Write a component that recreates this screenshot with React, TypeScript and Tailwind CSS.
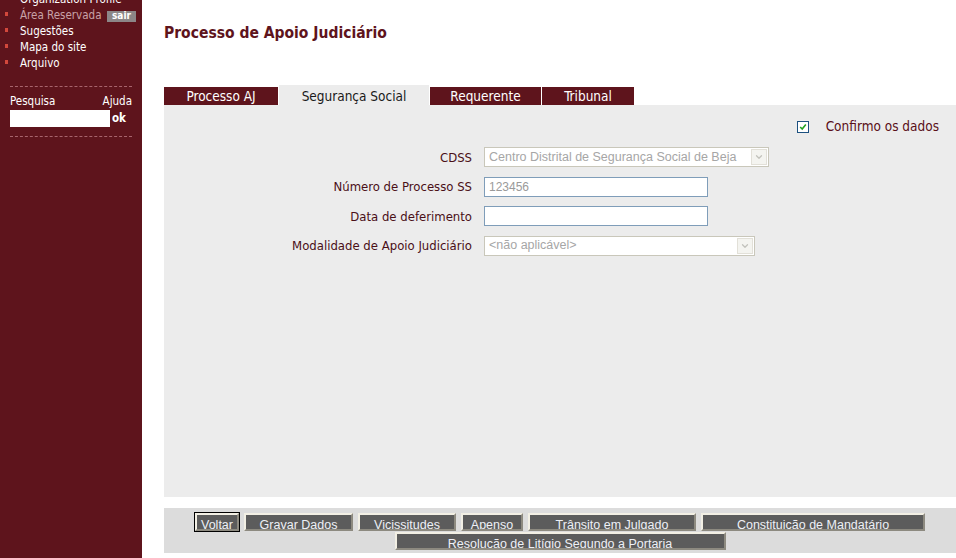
import { ChevronDown } from "lucide-react";

const menu = [
  { label: "Organization Profile", muted: false },
  { label: "Área Reservada", muted: true, badge: true },
  { label: "Sugestões", muted: false },
  { label: "Mapa do site", muted: false },
  { label: "Arquivo", muted: false },
];

const tabs = [
  { label: "Processo AJ", w: "w-[114px]" },
  { label: "Segurança Social", w: "w-[150px]", active: true },
  { label: "Requerente", w: "w-[111px]" },
  { label: "Tribunal", w: "w-[92px]" },
];

const buttons = [
  { label: "Voltar", w: "w-[44px]", focus: true },
  { label: "Gravar Dados", w: "w-[109px]" },
  { label: "Vicissitudes", w: "w-[98px]" },
  { label: "Apenso", w: "w-[62px]" },
  { label: "Trânsito em Julgado", w: "w-[168px]" },
  { label: "Constituição de Mandatário", w: "w-[224px]" },
  { label: "Resolução de Litígio Segundo a Portaria", w: "w-[331px]" },
];

function Sidebar() {
  return (
    <aside className="w-[142px] shrink-0 bg-[#5e141c] text-[11.5px] font-['DejaVu_Sans_Condensed',sans-serif]">
      <ul className="-mt-[8px]">
        {menu.map((item) => (
          <li key={item.label} className="relative flex h-[16px] items-center pl-[20px]">
            <span className="absolute left-[5px] top-[4px] h-[4px] w-[3px] bg-[#d2483c]" />
            <span className={item.muted ? "text-[#c8a2a8]" : "text-white"}>{item.label}</span>
            {item.badge && (
              <span className="ml-auto mr-[6px] flex h-[11px] w-[29px] items-center justify-center bg-[#8c8687] text-[10px] font-bold leading-none text-white">
                sair
              </span>
            )}
          </li>
        ))}
      </ul>
      <div className="mx-[10px] mt-[14px] border-t border-dashed border-[#a8656d]" />
      <div className="mx-[10px] mt-[6px] flex justify-between text-white">
        <span>Pesquisa</span>
        <span>Ajuda</span>
      </div>
      <div className="ml-[10px] mt-0 flex items-center gap-[2px]">
        <div className="h-[17px] w-[100px] bg-white" />
        <span className="font-bold text-white">ok</span>
      </div>
      <div className="mx-[10px] mt-[8px] border-t border-dashed border-[#a8656d]" />
    </aside>
  );
}

function Field({ width, value }: { width: string; value?: string }) {
  return (
    <div
      className={`flex h-[20px] ${width} items-center border border-[#7f9db9] bg-white pl-[4px] text-[12px] font-['Liberation_Sans',sans-serif] text-[#9a9a9a]`}
    >
      {value}
    </div>
  );
}

function Select({ width, value }: { width: string; value: string }) {
  return (
    <div className={`flex h-[20px] ${width} items-center border border-[#c9c7ba] bg-white text-[12.5px] font-['Liberation_Sans',sans-serif] text-[#a6a6a6]`}>
      <span className="flex-1 overflow-hidden whitespace-nowrap pl-[4px]">{value}</span>
      <span className="mr-px flex h-[16px] w-[16px] items-center justify-center border border-[#e2e0d8] bg-[#f4f4f0]">
        <ChevronDown className="h-[10px] w-[10px] text-[#c2c2bc]" strokeWidth={3} />
      </span>
    </div>
  );
}

export default function App() {
  const labelCls = "flex h-[20px] items-center justify-end text-[13px] text-[#4a0f17]";
  return (
    <div className="flex h-[558px] w-[956px] overflow-hidden bg-white font-['DejaVu_Sans_Condensed',sans-serif]">
      <Sidebar />
      <main className="flex flex-1 flex-col pl-[22px]">
        <h1 className="mt-[22px] text-[15.5px] font-bold text-[#5e141c]">Processo de Apoio Judiciário</h1>

        <div className="mt-[40px] flex items-end gap-px">
          {tabs.map((t) => (
            <div
              key={t.label}
              className={`${t.w} flex items-center justify-center text-[13.5px] ${
                t.active ? "h-[20px] bg-[#ececec] pt-[2px] text-[#1a1a1a]" : "h-[18px] bg-[#5e141c] text-white"
              }`}
            >
              {t.label}
            </div>
          ))}
        </div>

        <section className="flex h-[392px] flex-col bg-[#ececec] pt-[15px]">
          <div className="flex h-[13px] items-center justify-end pr-[17px]">
            <span className="flex h-[12px] w-[12px] items-center justify-center border border-[#1c5180] bg-white">
              <svg viewBox="0 0 10 10" className="h-[8px] w-[8px]">
                <path d="M1.5 5 L4 7.5 L8.5 2" fill="none" stroke="#21a121" strokeWidth="2" />
              </svg>
            </span>
            <span className="ml-[17px] text-[13.5px] leading-[13px] text-[#5a0f18]">Confirmo os dados</span>
          </div>

          <div className="mt-[14px] grid grid-cols-[308px_auto] gap-x-[12px] gap-y-[9.5px]">
            <span className={labelCls}>CDSS</span>
            <Select width="w-[285px]" value="Centro Distrital de Segurança Social de Beja" />
            <span className={labelCls}>Número de Processo SS</span>
            <Field width="w-[224px]" value="123456" />
            <span className={labelCls}>Data de deferimento</span>
            <Field width="w-[224px]" />
            <span className={labelCls}>Modalidade de Apoio Judiciário</span>
            <Select width="w-[271px]" value="<não aplicável>" />
          </div>
        </section>

        <div className="mt-[11px] flex h-[45px] flex-wrap content-start justify-center gap-x-[5px] gap-y-px bg-[#dcdcdc] pt-[5px] font-['Liberation_Sans',sans-serif] text-[12.5px]">
          {buttons.map((b) => (
            <button
              key={b.label}
              className={`${b.w} h-[18px] overflow-hidden border-2 border-t-[#f2efe4] border-l-[#f2efe4] border-b-[#8d8a80] border-r-[#8d8a80] bg-[#5c5c5c] pt-[3px] text-center leading-[15px] text-[#eef0f6] ${
                b.focus ? "outline outline-1 outline-black" : ""
              }`}
            >
              {b.label}
            </button>
          ))}
        </div>
      </main>
    </div>
  );
}
